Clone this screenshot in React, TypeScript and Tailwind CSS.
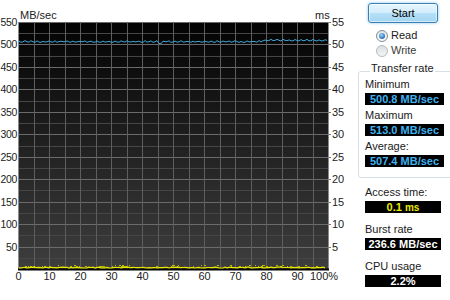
import React from "react"

const X0 = 18
const X1 = 328
const Y0 = 22
const Y1 = 269

const px = (p: number) => X0 + ((X1 - X0) * p) / 100
const py = (mb: number) => Y1 - ((Y1 - Y0) * mb) / 550

let seed = 11
const rnd = () => {
  seed = (seed * 9301 + 49297) % 233280
  return seed / 233280
}

// read speed trace
const bluePts: string[] = []
for (let x = X0 + 1, i = 0; x <= X1 - 1; x += 2, i++) {
  const base = x < 262 ? py(505.5) : py(508.5)
  const bump = i % 3 === 0 ? -1 : 0
  const y = base + bump + (rnd() - 0.5) * 0.9 + (Math.abs(x - 160) < 2 ? 1.5 : 0)
  bluePts.push(`${x},${y.toFixed(1)}`)
}

// access time trace
const yellowPts: string[] = []
for (let x = X0 + 1; x <= X1 - 2; x += 2) {
  yellowPts.push(`${x},${(267.6 + (rnd() - 0.5) * 0.8).toFixed(1)}`)
}
const specks: { x: number; y: number; w: number }[] = []
for (let i = 0; i < 60; i++) {
  specks.push({ x: X0 + 2 + rnd() * (X1 - X0 - 12), y: 265 + Math.round(rnd() * 1.5), w: 1 + Math.round(rnd()) })
}

const vLines = Array.from({ length: 21 }, (_, i) => Math.round(px(i * 5)) + 0.5)
const hLines = Array.from({ length: 23 }, (_, i) => ({ y: Math.round(py(i * 25)) + 0.5, major: i % 2 === 0 }))

const font = "Liberation Sans, Arial, sans-serif"
const ink = { fill: "#222222" }

const Chart = () => (
  <svg width={355} height={271} className="shrink-0" fontFamily={font} fontSize={11}>
    <defs>
      <linearGradient id="plotbg" x1="0" y1="0" x2="0" y2="1">
        <stop offset="0" stopColor="#030303" />
        <stop offset="1" stopColor="#3e3e3e" />
      </linearGradient>
    </defs>
    <rect x={X0} y={Y0} width={X1 - X0} height={Y1 - Y0} fill="url(#plotbg)" />
    {hLines.map((l) => (
      <line key={"h" + l.y} x1={X0} x2={X1} y1={l.y} y2={l.y} stroke={l.major ? "#6b6b6b" : "#464646"} strokeWidth={1} />
    ))}
    {vLines.map((x) => (
      <line key={"v" + x} x1={x} x2={x} y1={Y0} y2={Y1} stroke="#5e5e5e" strokeWidth={1} />
    ))}
    <line x1={X0 + 0.5} x2={X0 + 0.5} y1={Y0} y2={Y1} stroke="#8a8a8a" />
    <line x1={X1 + 0.5} x2={X1 + 0.5} y1={Y0} y2={Y1} stroke="#8a8a8a" />
    <line x1={X0} x2={X1 + 1} y1={Y1 + 0.5} y2={Y1 + 0.5} stroke="#000" strokeWidth={2} />

    {specks.map((s, i) => (
      <rect key={i} x={Math.round(s.x)} y={s.y} width={s.w} height={1} fill="#b8b800" />
    ))}
    <polyline points={yellowPts.join(" ")} fill="none" stroke="#e8e800" strokeWidth={1.2} />
    <polyline points={bluePts.join(" ")} fill="none" stroke="#3ea6d6" strokeWidth={1} />

    <g style={ink}>
      <text x={20} y={19} style={ink}>
        MB/sec
      </text>
      <text x={315} y={19} style={ink}>
        ms
      </text>
      {Array.from({ length: 11 }, (_, i) => 550 - i * 50).map((v) => (
        <text key={"l" + v} x={17} y={py(v) + 4} textAnchor="end" fontSize={10.5} letterSpacing={-0.3} style={ink}>
          {v}
        </text>
      ))}
      {Array.from({ length: 11 }, (_, i) => 55 - i * 5).map((v) => (
        <g key={"r" + v}>
          <line x1={X1 + 1} x2={X1 + 3} y1={Math.round(py(v * 10)) + 0.5} y2={Math.round(py(v * 10)) + 0.5} stroke="#777" />
          <text x={332} y={py(v * 10) + 4} style={ink}>
            {v}
          </text>
        </g>
      ))}
    </g>
  </svg>
)

const Radio = ({ label, checked }: { label: string; checked?: boolean }) => (
  <label className="flex h-[15px] items-center gap-[3px]">
    <span
      className={
        checked
          ? "flex h-[12px] w-[12px] items-center justify-center rounded-full border border-[#7f8c94] bg-[linear-gradient(#e4e7ea,#fbfbfb)]"
          : "flex h-[12px] w-[12px] items-center justify-center rounded-full border border-[#b4bbbf] bg-[linear-gradient(#dcdfe1,#f4f4f4)]"
      }
    >
      {checked && <span className="h-[6px] w-[6px] rounded-full bg-[radial-gradient(circle_at_40%_35%,#9fd6f7,#2a6fb6_70%,#1c4f8c)]" />}
    </span>
    <span className={checked ? "text-[#1a1a1a]" : "text-[#3a3a3a]"}>{label}</span>
  </label>
)

const Value = ({ children, color, wide }: { children: React.ReactNode; color: string; wide?: boolean }) => (
  <div
    className={`mt-[2px] h-[12px] bg-black text-center text-[11px] font-bold leading-[12px] ${color} ${
      wide ? "w-[79px]" : "w-[76px]"
    }`}
  >
    {children}
  </div>
)

export default function App() {
  return (
    <div className="flex h-[300px] w-[450px] overflow-hidden bg-white font-['Liberation_Sans',Arial,sans-serif] text-[11px] text-[#222]">
      <div className="flex w-[355px] shrink-0 flex-col">
        <Chart />
        <div className="-mt-[1px] ml-[3px] flex leading-[13px]">
          {["0", "10", "20", "30", "40", "50", "60", "70", "80", "90"].map((t) => (
            <span key={t} className="w-[31px] text-center">
              {t}
            </span>
          ))}
          <span className="-ml-[3px]">100%</span>
        </div>
      </div>
      <div className="flex w-[95px] shrink-0 flex-col text-[#1a1a1a]">
        <button className="mt-[3px] ml-[13px] h-[20px] w-[70px] rounded-[3px] border border-[#3c7fb1] bg-[linear-gradient(#e8f5fd,#d2edfb_48%,#b5e0f7_52%,#a4d6f2)] leading-[18px] text-black shadow-[inset_0_0_0_1px_rgba(255,255,255,0.55),0_0_3px_rgba(80,170,230,0.7)]">
          Start
        </button>
        <div className="mt-[5px] ml-[21px] flex flex-col">
          <Radio label="Read" checked />
          <Radio label="Write" />
        </div>
        <fieldset className="-mr-[10px] mt-[4px] ml-[3px] rounded-[3px] border border-[#d5dfe5] pb-[10px] pl-[6px]">
          <legend className="ml-[5px] px-[1px] pb-[6px] leading-[13px]">Transfer rate</legend>
          <div className="-mt-[3px] leading-[13px]">Minimum</div>
          <Value color="text-[#3fb2ee]" wide>
            500.8 MB/sec
          </Value>
          <div className="mt-[4px] leading-[13px]">Maximum</div>
          <Value color="text-[#3fb2ee]" wide>
            513.0 MB/sec
          </Value>
          <div className="mt-[4px] leading-[13px]">Average:</div>
          <Value color="text-[#3fb2ee]" wide>
            507.4 MB/sec
          </Value>
        </fieldset>
        <div className="ml-[10px] flex flex-col">
          <div className="mt-[8px] leading-[13px]">Access time:</div>
          <Value color="text-[#e8e800]">
            0.1 <span className="text-[10px]">ms</span>
          </Value>
          <div className="mt-[10px] leading-[13px]">Burst rate</div>
          <Value color="text-white">236.6 MB/sec</Value>
          <div className="mt-[10px] leading-[13px]">CPU usage</div>
          <Value color="text-white">2.2%</Value>
        </div>
      </div>
    </div>
  )
}
